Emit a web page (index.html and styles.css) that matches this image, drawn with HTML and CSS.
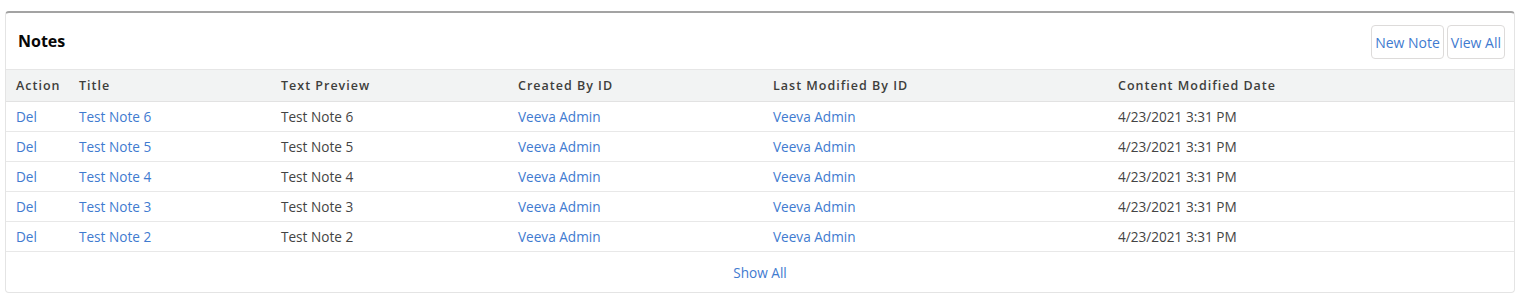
FILE: index.html
```html
<!DOCTYPE html>
<html>
<head>
<meta charset="utf-8">
<link rel="stylesheet" href="styles.css">
</head>
<body>
<div class="card">
  <div class="card-header">
    <h2 class="title">Notes</h2>
    <div class="actions">
      <a class="btn">New Note</a>
      <a class="btn">View All</a>
    </div>
  </div>
  <table class="list">
    <colgroup>
      <col class="c1"><col class="c2"><col class="c3"><col class="c4"><col class="c5"><col>
    </colgroup>
    <thead>
      <tr><th>Action</th><th>Title</th><th>Text Preview</th><th>Created By ID</th><th>Last Modified By ID</th><th>Content Modified Date</th></tr>
    </thead>
    <tbody>
      <tr><td><a>Del</a></td><td><a>Test Note 6</a></td><td>Test Note 6</td><td><a>Veeva Admin</a></td><td><a>Veeva Admin</a></td><td>4/23/2021 3:31 PM</td></tr>
      <tr><td><a>Del</a></td><td><a>Test Note 5</a></td><td>Test Note 5</td><td><a>Veeva Admin</a></td><td><a>Veeva Admin</a></td><td>4/23/2021 3:31 PM</td></tr>
      <tr><td><a>Del</a></td><td><a>Test Note 4</a></td><td>Test Note 4</td><td><a>Veeva Admin</a></td><td><a>Veeva Admin</a></td><td>4/23/2021 3:31 PM</td></tr>
      <tr><td><a>Del</a></td><td><a>Test Note 3</a></td><td>Test Note 3</td><td><a>Veeva Admin</a></td><td><a>Veeva Admin</a></td><td>4/23/2021 3:31 PM</td></tr>
      <tr><td><a>Del</a></td><td><a>Test Note 2</a></td><td>Test Note 2</td><td><a>Veeva Admin</a></td><td><a>Veeva Admin</a></td><td>4/23/2021 3:31 PM</td></tr>
    </tbody>
  </table>
  <div class="card-footer"><a>Show All</a></div>
</div>
</body>
</html>
```
FILE: styles.css
```css
html, body {
  margin: 0;
  padding: 0;
  background: #fff;
}
body {
  padding: 11px 5px 0 5px;
  font-family: "Open Sans", "Noto Sans", sans-serif;
  color: #444;
}
.card {
  width: 1510px;
  box-sizing: border-box;
  border: 1px solid #e4e4e4;
  border-top: 2px solid #a3a3a3;
  border-radius: 4px;
  background: #fff;
  overflow: hidden;
}
.card-header {
  display: flex;
  align-items: center;
  justify-content: space-between;
  height: 56px;
  padding: 0 9px 0 12px;
}
.title {
  margin: 0;
  font-size: 16px;
  font-weight: 700;
  color: #080707;
}
.actions {
  display: flex;
  gap: 3px;
  margin-top: 2px;
}
.btn {
  display: inline-flex;
  align-items: center;
  height: 34px;
  box-sizing: border-box;
  padding: 0 3px;
  border: 1px solid #dddbda;
  border-radius: 4px;
  color: #3f7bd0;
  font-size: 14px;
}
.list {
  width: 100%;
  border-collapse: collapse;
  table-layout: fixed;
}
.c1 { width: 73px; }
.c2 { width: 202px; }
.c3 { width: 237px; }
.c4 { width: 255px; }
.c5 { width: 345px; }
.list th {
  height: 32px;
  box-sizing: border-box;
  background: #f2f3f3;
  border-top: 1px solid #e6e6e6;
  border-bottom: 1px solid #e2e2e2;
  text-align: left;
  font-size: 12.5px;
  font-weight: 600;
  letter-spacing: 1px;
  color: #3e3e3c;
  padding: 0;
  white-space: nowrap;
}
.list th:first-child, .list td:first-child {
  padding-left: 10px;
}
.list td {
  height: 30px;
  box-sizing: border-box;
  border-bottom: 1px solid #e8e8e8;
  font-size: 13.6px;
  padding: 0;
  color: #444;
  white-space: nowrap;
}
a {
  color: #3f7bd0;
  text-decoration: none;
}
.card-footer {
  height: 40px;
  display: flex;
  align-items: center;
  justify-content: center;
  font-size: 13.6px;
}
```
